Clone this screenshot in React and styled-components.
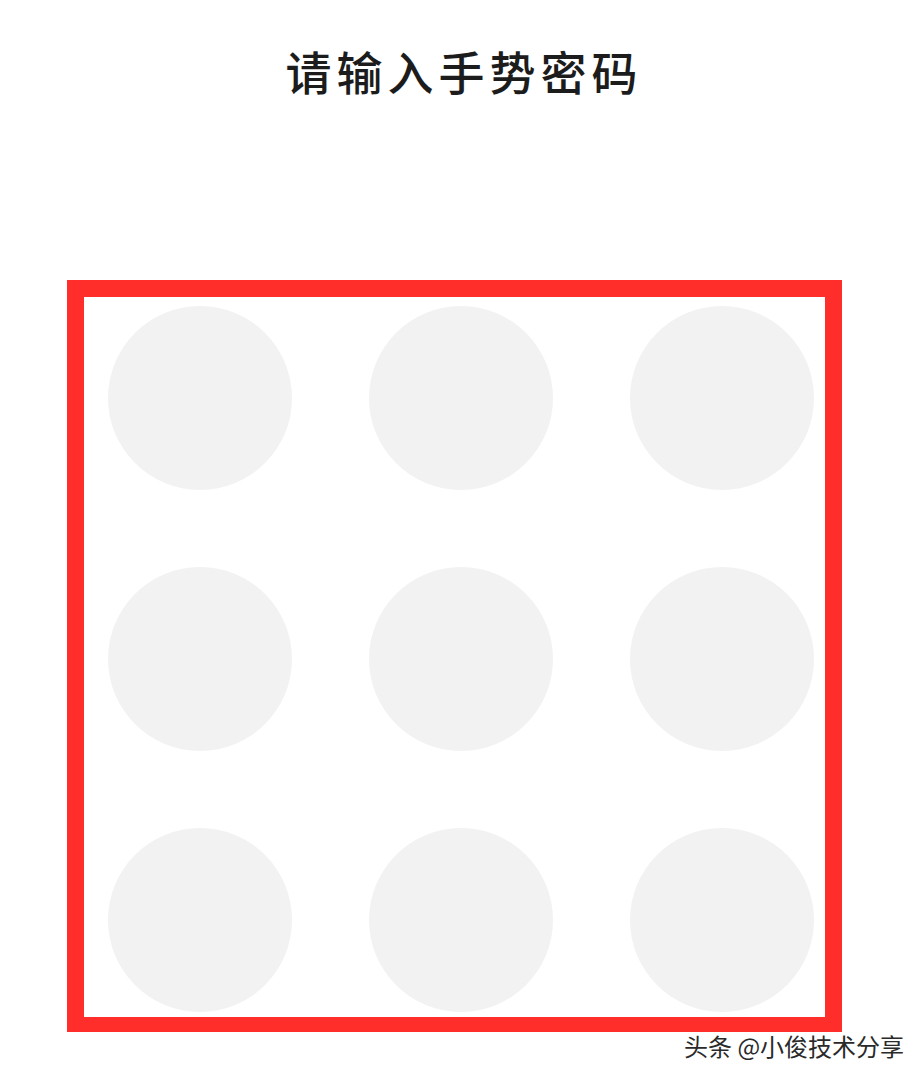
import React from "react";
import styled, { createGlobalStyle } from "styled-components";

const Global = createGlobalStyle`
  html, body { margin: 0; padding: 0; background: #ffffff; }
  body { font-family: "Noto Sans CJK SC", "Noto Sans", sans-serif; }
`;

const Page = styled.div`
  position: relative;
  width: 923px;
  height: 1080px;
  background: #fff;
  overflow: hidden;
`;

const Title = styled.h1`
  margin: 0;
  padding-top: 40px;
  height: 280px;
  box-sizing: border-box;
  text-align: center;
  font-size: 46px;
  line-height: 60px;
  font-weight: 500;
  letter-spacing: 5px;
  text-indent: 5px;
  color: #1c1c1c;
`;

const Frame = styled.div`
  margin-left: 67px;
  width: 775px;
  height: 752px;
  box-sizing: border-box;
  border: 17px solid #ff2e2b;
  border-bottom-width: 15px;
  padding: 9px 11px 5px 24px;
`;

const Grid = styled.div`
  display: grid;
  grid-template-columns: repeat(3, 184px);
  grid-template-rows: repeat(3, 184px);
  column-gap: 77px;
  row-gap: 77px;
`;

const Dot = styled.div`
  width: 184px;
  height: 184px;
  border-radius: 50%;
  background: #f2f2f2;
`;

const Watermark = styled.div`
  position: absolute;
  left: 684px;
  top: 1028px;
  font-size: 24px;
  line-height: 36px;
  color: #2a2a2a;
  text-shadow: 1px 1px 0 #fff, -1px -1px 0 #fff, 1px -1px 0 #fff, -1px 1px 0 #fff;
`;

export default function App() {
  return (
    <Page>
      <Global />
      <Title>请输入手势密码</Title>
      <Frame>
        <Grid>
          {Array.from({ length: 9 }).map((_, i) => (
            <Dot key={i} />
          ))}
        </Grid>
      </Frame>
      <Watermark>头条 @小俊技术分享</Watermark>
    </Page>
  );
}
